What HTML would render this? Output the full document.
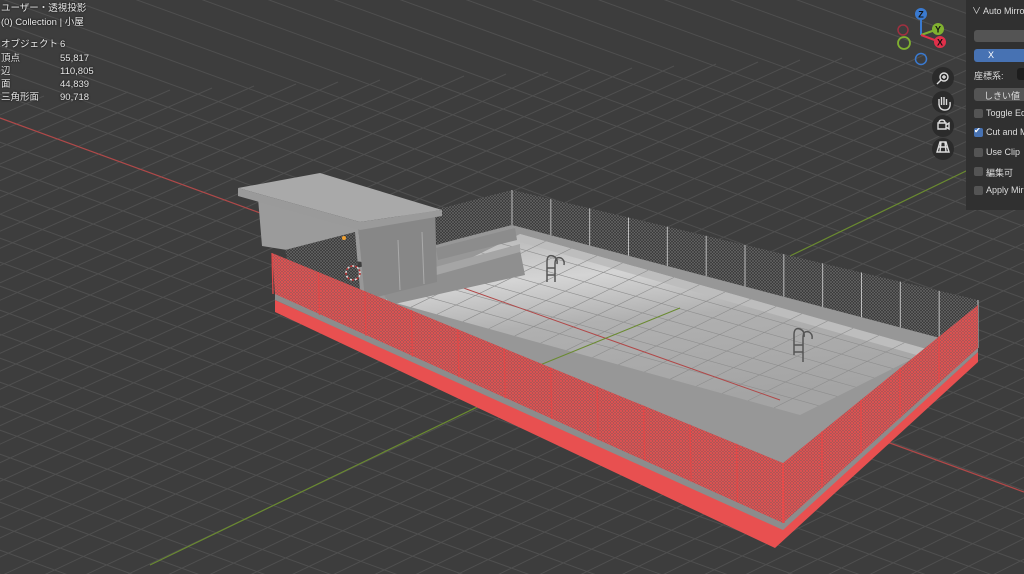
<!DOCTYPE html>
<html><head><meta charset="utf-8">
<style>
html,body{margin:0;padding:0;width:1024px;height:574px;overflow:hidden;background:#3d3d3d;font-family:"Liberation Sans","Noto Sans CJK JP",sans-serif;}
#v{position:absolute;left:0;top:0}
.t{position:absolute;color:#e6e6e6;font-size:9.5px;line-height:12px;text-shadow:0 0 2px #000}
#panel{position:absolute;left:966px;top:0;width:58px;height:210px;background:#303030;font-size:9px;color:#ddd;overflow:hidden}
.pl{position:absolute;left:8px;white-space:nowrap}
.cb{position:absolute;left:8px;width:9px;height:9px;border-radius:2px;background:#545454}
.nb{position:absolute;width:22px;height:22px;border-radius:11px;background:#2b2b2b;left:932px}
</style></head><body>
<svg id="v" width="1024" height="574" xmlns="http://www.w3.org/2000/svg">
<defs>
<pattern id="rm" width="3" height="3" patternUnits="userSpaceOnUse">
<rect width="3" height="3" fill="#8e5858"/>
<path d="M0 3L3 0M0 0L3 3" stroke="#e85050" stroke-width="0.8"/>
</pattern>
<pattern id="dm" width="3" height="3" patternUnits="userSpaceOnUse">
<rect width="3" height="3" fill="#363636"/>
<path d="M0 3L3 0M0 0L3 3" stroke="#6a6a6a" stroke-width="0.6"/>
</pattern>
<linearGradient id="pf" x1="0" y1="0" x2="0.25" y2="1">
<stop offset="0" stop-color="#b4b4b4"/><stop offset="0.3" stop-color="#d4d4d4"/><stop offset="0.55" stop-color="#b0b0b0"/><stop offset="1" stop-color="#a4a4a4"/>
</linearGradient>
</defs>
<g id="grid" stroke="#4f4f4f" stroke-width="1"></g>
<line x1="0" y1="118" x2="1024" y2="492" stroke="#b04848" stroke-width="1.2"/>
<line x1="150" y1="565" x2="1024" y2="143" stroke="#6a8a30" stroke-width="1.2"/>
<polygon points="275,300 783,528 978,352 978,362 775,548 275,312" fill="#e85050"/>
<polygon points="275,292 515,222 978,345 783,522" fill="#979797"/>
<polygon points="275,292 783,522 978,345 978,352 783,530 275,300" fill="#8c8c8c"/>
<polygon points="385,300 520,234 930,350 800,415" fill="url(#pf)"/>
<polygon points="520,234 930,350 920,356 520,242" fill="#bdbdbd"/>
<g stroke="#8e8e8e" stroke-width="0.6" id="pg"></g>
<line x1="455" y1="285" x2="780" y2="400" stroke="#b04848" stroke-width="1"/>
<line x1="540" y1="365" x2="680" y2="308" stroke="#6a8a30" stroke-width="1"/>
<g fill="none" stroke="#555" stroke-width="1.5">
<path d="M547 282V262q0-8 6-6 5 2 4 8M555 282V264q0-8 6-6 4 2 3 7M547 268h8M547 275h8"/>
<path d="M794 355V335q0-8 6-6 5 2 4 8M803 362V338q0-8 6-6 4 2 3 7M794 345h9M794 352h9"/>
</g>
<polygon points="435,210 512,190 512,225 435,245" fill="url(#dm)"/>
<polygon points="512,190 978,300 978,348 512,225" fill="url(#dm)"/>
<g stroke="#bdbdbd" stroke-width="1" id="bp"></g>
<polygon points="380,288 520,250 525,275 390,305" fill="#8f8f8f"/>
<polygon points="380,282 520,244 520,252 382,290" fill="#a5a5a5"/>
<polygon points="436,248 515,228 517,240 438,260" fill="#8c8c8c"/>
<polygon points="258,198 358,226 362,262 262,246" fill="#9b9b9b"/>
<polygon points="285,250 355,232 360,290 290,270" fill="url(#dm)"/>
<polygon points="358,226 435,208 437,282 365,300" fill="#878787"/>
<line x1="398" y1="240" x2="400" y2="290" stroke="#aaa"/>
<line x1="422" y1="232" x2="424" y2="284" stroke="#aaa"/>
<polygon points="238,188 320,173 442,210 360,222" fill="#a9a9a9"/>
<polygon points="238,188 360,222 442,210 442,216 360,230 238,196" fill="#9a9a9a"/>
<circle cx="344" cy="238" r="2" fill="#f0a030"/>
<circle cx="353" cy="273" r="7" fill="none" stroke="#c03030" stroke-width="1.5" stroke-dasharray="3 2"/>
<circle cx="353" cy="273" r="7" fill="none" stroke="#ddd" stroke-width="1.5" stroke-dasharray="2 3" stroke-dashoffset="3"/>
<polygon points="272,253 783,463 783,523 275,294" fill="url(#rm)"/>
<polygon points="783,463 978,305 978,348 783,523" fill="url(#rm)"/>
<g stroke="#e04848" stroke-width="1.3" id="rp"></g>
<line x1="783" y1="463" x2="783" y2="523" stroke="#e84a4a" stroke-width="1.5"/>
</svg>
<div class="t" style="left:1px;top:3px">ユーザー・透視投影</div>
<div class="t" style="left:1px;top:17px">(0) Collection | 小屋</div>
<div class="t" style="left:1px;top:39px">オブジェクト</div><div class="t" style="left:60px;top:39px">6</div>
<div class="t" style="left:1px;top:53px">頂点</div><div class="t" style="left:60px;top:53px">55,817</div>
<div class="t" style="left:1px;top:66px">辺</div><div class="t" style="left:60px;top:66px">110,805</div>
<div class="t" style="left:1px;top:79px">面</div><div class="t" style="left:60px;top:79px">44,839</div>
<div class="t" style="left:1px;top:92px">三角形面</div><div class="t" style="left:60px;top:92px">90,718</div>
<svg style="position:absolute;left:890px;top:0" width="70" height="70">
<line x1="31" y1="35" x2="31" y2="15" stroke="#3a7ad0" stroke-width="2"/>
<line x1="31" y1="35" x2="48" y2="29" stroke="#80b030" stroke-width="2"/>
<line x1="31" y1="35" x2="50" y2="42" stroke="#e0304a" stroke-width="2"/>
<circle cx="13" cy="30" r="5" fill="none" stroke="#a03040" stroke-width="1.5"/>
<circle cx="14" cy="43" r="6" fill="none" stroke="#80b030" stroke-width="1.8"/>
<circle cx="31" cy="59" r="5.5" fill="none" stroke="#3a7ad0" stroke-width="1.5"/>
<circle cx="31" cy="14" r="6" fill="#3a7ad0"/><text x="31" y="17.5" font-size="9" text-anchor="middle" fill="#111" font-family="Liberation Sans" font-weight="bold">Z</text>
<circle cx="48" cy="29" r="6" fill="#80b030"/><text x="48" y="32.5" font-size="9" text-anchor="middle" fill="#111" font-family="Liberation Sans" font-weight="bold">Y</text>
<circle cx="50" cy="42" r="6" fill="#e0304a"/><text x="50" y="45.5" font-size="9" text-anchor="middle" fill="#111" font-family="Liberation Sans" font-weight="bold">X</text>
</svg>
<div class="nb" style="top:67px"></div><div class="nb" style="top:91px"></div><div class="nb" style="top:115px"></div><div class="nb" style="top:138px"></div>
<svg style="position:absolute;left:932px;top:67px" width="22" height="94" fill="none" stroke="#ddd" stroke-width="1.4">
<circle cx="12" cy="10" r="4"/><path d="M9 13l-4 4M10 10h4M12 8v4"/>
<path d="M7 38v-6M9.5 38v-8M12 38v-8M14.5 38v-6M7 36q0 7 6 7t5-8"/>
<path d="M6 56h8v6H6zM14 58l3-2v6l-3-2M7 56q0-3 3-3t3 3"/>
<path d="M5 85l3-10h6l3 10zM6 80h10M9 75l-1 10M13 75l1 10"/>
</svg>
<div id="panel">
<div class="pl" style="top:4px;left:6px">∨ Auto Mirror</div>
<div style="position:absolute;left:8px;top:30px;width:60px;height:12px;background:#545454;border-radius:3px"></div>
<div style="position:absolute;left:8px;top:49px;width:60px;height:13px;background:#4772b3;border-radius:3px"></div>
<div style="position:absolute;left:8px;top:49px;width:34px;height:13px;color:#fff;text-align:center;line-height:13px">X</div>
<div class="pl" style="top:69px">座標系:</div>
<div style="position:absolute;left:51px;top:68px;width:20px;height:12px;background:#1d1d1d;border-radius:3px"></div>
<div style="position:absolute;left:8px;top:88px;width:60px;height:13px;background:#545454;border-radius:3px"></div>
<div class="pl" style="top:89px;left:18px">しきい値</div>
<div class="cb" style="top:109px"></div><div class="pl" style="top:108px;left:20px">Toggle Edit</div>
<div class="cb" style="top:128px;background:#4772b3"></div><div class="pl" style="top:126px;left:8px;color:#fff;font-size:8px">✔</div><div class="pl" style="top:127px;left:20px">Cut and Mirror</div>
<div class="cb" style="top:148px"></div><div class="pl" style="top:147px;left:20px">Use Clip</div>
<div class="cb" style="top:167px"></div><div class="pl" style="top:166px;left:20px">編集可</div>
<div class="cb" style="top:186px"></div><div class="pl" style="top:185px;left:20px">Apply Mirror</div>
</div>
<script>
var NS="http://www.w3.org/2000/svg";
function L(g,x1,y1,x2,y2){var l=document.createElementNS(NS,"line");l.setAttribute("x1",x1);l.setAttribute("y1",y1);l.setAttribute("x2",x2);l.setAttribute("y2",y2);document.getElementById(g).appendChild(l);}
for(var i=-60;i<60;i++){var y=118+i*24;L("grid",-50,y-18,1100,y+400);}
for(var i=-30;i<70;i++){var x=-600+i*42;L("grid",x,700,x+1400,60-i*2);}
function P(a,b,t){return [a[0]+(b[0]-a[0])*t,a[1]+(b[1]-a[1])*t];}
var A=[385,300],B=[520,234],C=[930,350],D=[800,415];
for(var k=1;k<16;k++){var t=k/16;var p=P(A,D,t),q=P(B,C,t);L("pg",p[0],p[1],q[0],q[1]);}
for(var k=1;k<7;k++){var t=k/7;var p=P(A,B,t),q=P(D,C,t);L("pg",p[0],p[1],q[0],q[1]);}
for(var k=0;k<=12;k++){var t=k/12;var x=512+466*t,y=190+110*t;L("bp",x,y,x,y+35+13*t);}
for(var k=0;k<=11;k++){var t=k/11;var x=272+511*t,y=253+210*t;L("rp",x,y,x+1,y+41+19*t);}
for(var k=1;k<5;k++){var t=k/5;var x=783+195*t,y=463-158*t;L("rp",x,y,x,y+60-17*t);}
</script>
</body></html>
